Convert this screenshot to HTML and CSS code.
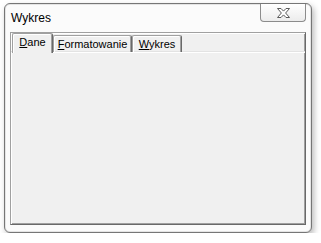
FILE: index.html
```html
<!DOCTYPE html>
<html lang="pl">
  <head>
    <meta charset="UTF-8" />
    <title>Wykres</title>
    <link rel="stylesheet" href="styles.css">
  </head>
  <body>
    <div class="window">
      <div class="titlebar">
        <span class="title">Wykres</span>
        <button class="close" aria-label="Zamknij">
          <svg width="13" height="10" viewBox="0 0 13 10">
            <path d="M0.5 0.5H4L6.5 3.1L9 0.5H12.5L8.6 5L12.5 9.5H9L6.5 6.9L4 9.5H0.5L4.4 5Z"
              fill="#fff" stroke="#5a5a5a" stroke-width="1" stroke-linejoin="round" />
          </svg>
        </button>
      </div>

      <div class="panel">
        <div class="tabs">
          <div class="tab active" style="width: 41px"><u>D</u>ane</div>
          <div class="tab" style="width: 79px"><u>F</u>ormatowanie</div>
          <div class="tab" style="width: 50px"><u>W</u>ykres</div>
        </div>
        <div class="page"></div>
      </div>
    </div>
  </body>
</html>
```

FILE: styles.css
```css
body {
  margin: 0;
  padding: 3px 0 0 4px;
  background: #fff;
  font-family: "Liberation Sans", Arial, sans-serif;
}

.window {
  width: 308px;
  height: 230px;
  box-sizing: border-box;
  border: 1px solid #767676;
  border-radius: 6px;
  background: #fbfbfb;
  box-shadow: 2px 3px 6px rgba(0, 0, 0, 0.28), inset 0 0 0 1px #e4e4e4;
  display: flex;
  flex-direction: column;
}

.titlebar {
  height: 28px;
  display: flex;
  justify-content: space-between;
  align-items: flex-start;
  padding: 0 5px 0 6px;
}

.title {
  margin-top: 7px;
  font-size: 12px;
  line-height: 14px;
  color: #000;
}

.close {
  width: 46px;
  height: 18px;
  padding: 0;
  border: 1px solid #8c8c8c;
  border-top: none;
  border-radius: 0 0 4px 4px;
  background: linear-gradient(#ffffff, #ececec);
  display: flex;
  align-items: center;
  justify-content: center;
}

.close svg {
  display: block;
  margin-top: 1px;
}

.panel {
  margin: 0 5px;
  height: 193px;
  box-sizing: border-box;
  background: #f0f0f0;
  border-top: 1px solid #a0a0a0;
  border-left: 1px solid #a0a0a0;
  border-right: 1px solid #696969;
  border-bottom: 1px solid #696969;
  box-shadow: inset 1px 1px #fff, inset -1px -1px #a0a0a0;
  display: flex;
  flex-direction: column;
}

.tabs {
  display: flex;
  align-items: flex-end;
  height: 19px;
  padding-left: 1px;
  border-bottom: 1px solid #fff;
  box-shadow: 0 -1px 0 #e3e3e3 inset;
}

.tab {
  height: 17px;
  box-sizing: border-box;
  border-top: 1px solid #a0a0a0;
  border-left: 1px solid #a0a0a0;
  border-right: 1px solid #696969;
  border-radius: 2px 2px 0 0;
  box-shadow: inset -1px 0 #a0a0a0, inset 1px 1px #fff;
  font-size: 11px;
  line-height: 16px;
  text-align: center;
  color: #000;
  white-space: nowrap;
}

.tab.active {
  height: 20px;
  margin-bottom: -1px;
  line-height: 17px;
  background: #f0f0f0;
}

.tab u {
  text-decoration: underline;
  text-underline-offset: 1px;
}

.page {
  flex: 1;
}
```
